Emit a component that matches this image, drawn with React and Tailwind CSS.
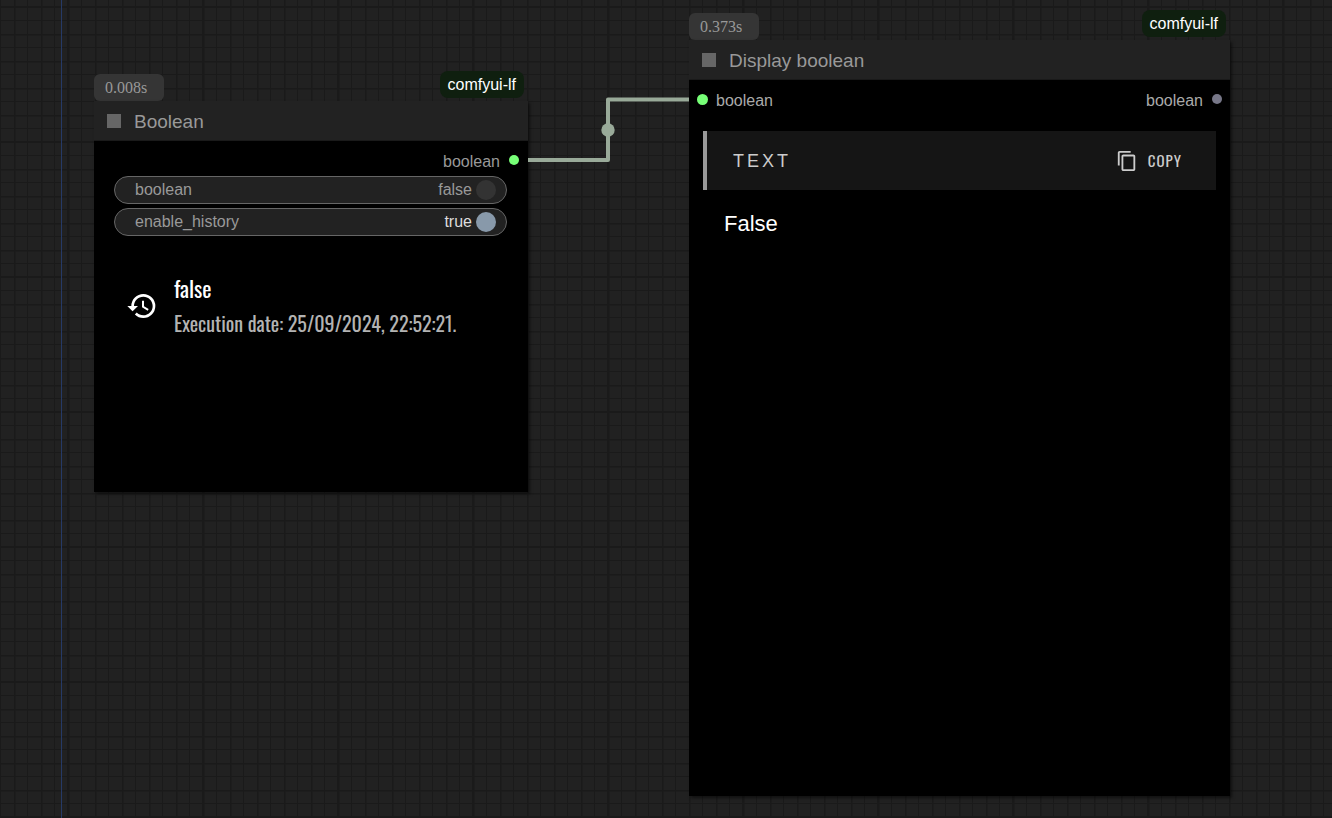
import { MdContentCopy, MdHistory } from "react-icons/md";

const STEPS = [1, 2, 3, 4, 5, 6, 7, 8, 9];

function CanvasGrid() {
  return (
    <svg className="absolute inset-0 h-full w-full" aria-hidden="true">
      <defs>
        <pattern id="grid" x="67" y="6" width="135" height="135" patternUnits="userSpaceOnUse">
          <g fill="#1a1a1a">
            {STEPS.map((n) => (
              <g key={n}>
                <rect x={Math.floor(n * 13.5) + 1} y="0" width={n % 2 ? 1 : 1.5} height="135" />
                <rect x="0" y={Math.floor(n * 13.5) + 1} width="135" height={n % 2 ? 1 : 1.5} />
              </g>
            ))}
            <rect x="0" y="0" width="2.5" height="135" />
            <rect x="0" y="0" width="135" height="2" />
          </g>
        </pattern>
      </defs>
      <rect width="100%" height="100%" fill="url(#grid)" />
      <rect x="61" y="0" width="1" height="100%" fill="#263a66" />
    </svg>
  );
}

function Link() {
  return (
    <svg className="absolute inset-0 h-full w-full" aria-hidden="true">
      <path d="M528 160H608V99.500H689" fill="none" stroke="#99aa99" strokeWidth="4" strokeLinejoin="round" />
      <circle cx="608" cy="130" r="6.700" fill="#99aa99" />
    </svg>
  );
}

function Node({ title, time, className, children }) {
  return (
    <section className={`absolute flex flex-col ${className}`}>
      <div className="flex h-[30px] justify-between">
        <span className="h-[27px] w-[70px] self-end rounded-md bg-[#353535] pl-[11px] font-['Liberation_Serif',serif] text-base leading-[28px] text-[#999]">
          {time}
        </span>
        <span className="mr-1 h-[27px] rounded-lg bg-[#0f1f0f] px-2 text-base leading-[27px] text-white">
          comfyui-lf
        </span>
      </div>
      <div className="flex flex-1 flex-col shadow-[2px_2px_3px_rgba(0,0,0,0.5)]">
        <header className="flex h-10 items-center gap-[13px] border-b border-[#1a1a1a] bg-[#222] pl-[13px]">
          <span className="size-[14px] bg-[#666]" />
          <h2 className="pt-[3px] text-[19px] text-[#999]">{title}</h2>
        </header>
        <div className="flex-1 bg-black">{children}</div>
      </div>
    </section>
  );
}

function Toggle({ label, defaultChecked }) {
  return (
    <label className="group flex h-7 items-center rounded-full border border-[#666] bg-[#222] pr-[10px] pl-5 text-base text-[#999]">
      <span className="flex-1">{label}</span>
      <span className="group-has-checked:hidden">false</span>
      <span className="hidden text-[#ddd] group-has-checked:inline">true</span>
      <input
        type="checkbox"
        defaultChecked={defaultChecked}
        className="ml-1 size-5 appearance-none rounded-full bg-[#333] checked:bg-[#8899aa]"
      />
    </label>
  );
}

export default function App() {
  return (
    <main className="relative min-h-screen overflow-hidden bg-[#212121] font-['Liberation_Sans',Arial,sans-serif]">
      <CanvasGrid />
      <Node title="Boolean" time="0.008s" className="top-[71px] left-[94px] min-h-[421px] w-[434px]">
        <div className="pt-[5px]">
          <div className="flex h-7 items-center justify-end gap-[9px] pr-[9px] text-base text-[#999]">
            <span className="pt-[3px]">boolean</span>
            <span className="size-[10px] rounded-full bg-[#77ff77]" />
          </div>
          <div className="mt-0.5 flex flex-col gap-1 pr-[21px] pl-5">
            <Toggle label="boolean" />
            <Toggle label="enable_history" defaultChecked />
          </div>
          <div className="mt-[35px] flex items-center gap-4 pl-8 font-['Oswald',sans-serif]">
            <MdHistory className="size-8 shrink-0 text-white" />
            <div>
              <p className="text-[22px] leading-[35px] text-white">false</p>
              <p className="text-xl leading-[35px] whitespace-nowrap text-[#b3b3b3]">
                Execution date: 25/09/2024, 22:52:21.
              </p>
            </div>
          </div>
        </div>
      </Node>
      <Node title="Display boolean" time="0.373s" className="top-[10px] left-[689px] min-h-[786px] w-[541px]">
        <div className="px-[14px] pt-[5px]">
          <div className="-mx-[6px] flex h-7 items-center justify-between text-base text-[#aaa]">
            <span className="flex items-center gap-2">
              <span className="size-[11px] rounded-full bg-[#77ff77]" />
              <span className="pt-[3px]">boolean</span>
            </span>
            <span className="flex items-center gap-[9px]">
              <span className="pt-[3px]">boolean</span>
              <span className="size-[10px] rounded-full bg-[#777788]" />
            </span>
          </div>
          <div className="mt-[18px] flex h-[59px] items-center justify-between border-l-4 border-[#999] bg-[#151515] pr-[34px] pl-[26px] text-[#ccc]">
            <h3 className="text-lg tracking-[3px]">TEXT</h3>
            <button
              type="button"
              className="flex items-center gap-[10px] font-['Oswald',sans-serif] text-[15px] tracking-[1px]"
            >
              <MdContentCopy className="size-[22px]" />
              COPY
            </button>
          </div>
          <p className="mt-[17px] pl-[21px] text-[22px] leading-[34px] text-white">False</p>
        </div>
      </Node>
      <Link />
    </main>
  );
}
